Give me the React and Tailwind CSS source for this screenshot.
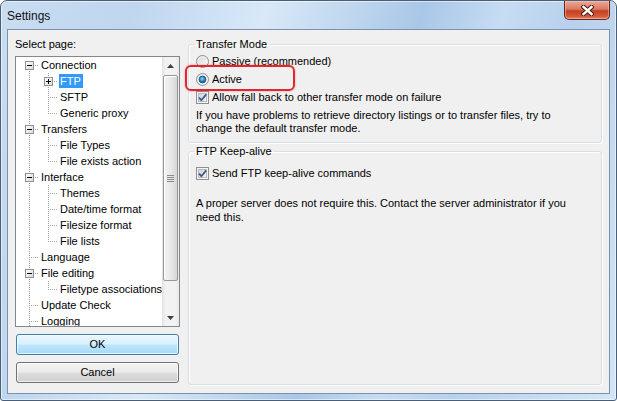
import React from "react";

const rows = [
  { c: ["toptee"], b: "minus", t: "Connection" },
  { c: ["pipe", "tee"], b: "plus", t: "FTP", sel: true },
  { c: ["pipe", "tee"], t: "SFTP" },
  { c: ["pipe", "corner"], t: "Generic proxy" },
  { c: ["tee"], b: "minus", t: "Transfers" },
  { c: ["pipe", "tee"], t: "File Types" },
  { c: ["pipe", "corner"], t: "File exists action" },
  { c: ["tee"], b: "minus", t: "Interface" },
  { c: ["pipe", "tee"], t: "Themes" },
  { c: ["pipe", "tee"], t: "Date/time format" },
  { c: ["pipe", "tee"], t: "Filesize format" },
  { c: ["pipe", "corner"], t: "File lists" },
  { c: ["tee"], t: "Language" },
  { c: ["tee"], b: "minus", t: "File editing" },
  { c: ["pipe", "corner"], t: "Filetype associations" },
  { c: ["tee"], t: "Update Check" },
  { c: ["tee"], t: "Logging" },
];

function Defs() {
  return (
    <svg width="0" height="0" className="block">
      <defs>
        <linearGradient id="boxg" x1="0" y1="0" x2="1" y2="1">
          <stop offset="0" stopColor="#ffffff" />
          <stop offset="1" stopColor="#d8d8d8" />
        </linearGradient>
        <linearGradient id="radg" x1="0" y1="0" x2="1" y2="1">
          <stop offset="0" stopColor="#d6d6d6" />
          <stop offset="1" stopColor="#fbfbfb" />
        </linearGradient>
        <radialGradient id="dotg" cx="0.45" cy="0.4" r="0.6">
          <stop offset="0" stopColor="#8fd6fb" />
          <stop offset="0.55" stopColor="#2f8bd0" />
          <stop offset="1" stopColor="#154e80" />
        </radialGradient>
        <linearGradient id="chkg" x1="0" y1="0" x2="1" y2="1">
          <stop offset="0" stopColor="#cdd0d6" />
          <stop offset="1" stopColor="#f7f7f7" />
        </linearGradient>
      </defs>
    </svg>
  );
}

function TreeCell({ kind, box }) {
  const dot = { stroke: "#a0a0a0", strokeDasharray: "1 1", strokeWidth: 1 };
  return (
    <svg width="19" height="16" className="block shrink-0">
      {kind === "pipe" && <line x1="9.5" y1="0" x2="9.5" y2="16" {...dot} />}
      {kind === "tee" && (
        <>
          <line x1="9.5" y1="0" x2="9.5" y2="16" {...dot} />
          <line x1="9" y1="8.5" x2="19" y2="8.5" {...dot} />
        </>
      )}
      {kind === "corner" && (
        <>
          <line x1="9.5" y1="0" x2="9.5" y2="9" {...dot} />
          <line x1="9" y1="8.5" x2="19" y2="8.5" {...dot} />
        </>
      )}
      {kind === "toptee" && (
        <>
          <line x1="9.5" y1="8" x2="9.5" y2="16" {...dot} />
          <line x1="9" y1="8.5" x2="19" y2="8.5" {...dot} />
        </>
      )}
      {box && (
        <>
          <rect x="5.5" y="4.5" width="8" height="8" fill="url(#boxg)" stroke="#919191" />
          <line x1="7" y1="8.5" x2="12" y2="8.5" stroke="#000" />
          {box === "plus" && <line x1="9.5" y1="6" x2="9.5" y2="11" stroke="#000" />}
        </>
      )}
    </svg>
  );
}

function Radio({ checked }) {
  return (
    <svg width="13" height="13" className="block shrink-0">
      <circle cx="6.5" cy="6.5" r="6" fill="url(#radg)" stroke="#8e8f8f" />
      <circle cx="6.5" cy="6.5" r="4.6" fill="none" stroke="#f4f4f4" strokeWidth="0.8" />
      {checked && <circle cx="6.5" cy="6.5" r="3.4" fill="url(#dotg)" stroke="#1a4f7c" strokeWidth="0.8" />}
    </svg>
  );
}

function Check() {
  return (
    <svg width="13" height="13" className="block shrink-0">
      <rect x="0.5" y="0.5" width="12" height="12" fill="#f4f4f4" stroke="#8e8f8f" />
      <rect x="2.5" y="2.5" width="8" height="8" fill="url(#chkg)" stroke="#b9bcc2" />
      <path d="M3 6.6 L5.4 9.2 L10.2 3.4" fill="none" stroke="#3c5689" strokeWidth="1.7" />
    </svg>
  );
}

function Arrow({ up }) {
  return (
    <div className="flex h-[17px] items-center justify-center">
      <svg width="7" height="4" className="block">
        {up ? <path d="M0 4 L3.5 0 L7 4 Z" fill="#404040" /> : <path d="M0 0 L3.5 4 L7 0 Z" fill="#404040" />}
      </svg>
    </div>
  );
}

export default function App() {
  return (
    <div className="h-[401px] w-[617px] bg-white font-['Liberation_Sans',Arial,sans-serif] text-[11px] text-black">
      <Defs />
      <div className="flex h-full w-full flex-col overflow-hidden rounded-t-[7px] rounded-b-[3px] border border-[#4b5e78] bg-[linear-gradient(108deg,#c9ddf2_0%,#bfd6ef_18%,#d8e8f8_36%,#c3d9f0_46%,#a9c7e7_57%,#c6dcf3_68%,#b7d0ec_78%,#d3e6f8_100%)] shadow-[inset_0_0_0_1px_rgba(255,255,255,0.55)]">
        <div className="flex h-[28px] shrink-0 items-start justify-between pl-[6px] pr-[6px]">
          <div className="flex h-[28px] items-center pt-[1px] text-[12px] text-[#111]">Settings</div>
          <div className="flex h-[19px] w-[46px] items-center justify-center rounded-b-[5px] border border-t-0 border-[#6b2418] bg-[linear-gradient(180deg,#e9a998_0%,#da7a63_45%,#c4401f_55%,#d25a3e_85%,#e28a6e_100%)] shadow-[inset_0_0_0_1px_rgba(255,210,190,0.45)]">
            <svg width="13" height="11" className="block">
              <path d="M2.5 2 L10.5 9 M10.5 2 L2.5 9" stroke="#4a1a12" strokeWidth="4.4" strokeLinecap="square" />
              <path d="M2.5 2 L10.5 9 M10.5 2 L2.5 9" stroke="#ffffff" strokeWidth="2.4" strokeLinecap="square" />
            </svg>
          </div>
        </div>

        <div className="mx-[6px] mb-[6px] flex flex-1 border border-[#7d91aa] bg-[#f0f0f0] pl-[7px] pr-[7px] pt-[7px] pb-[8px]">
          <div className="flex w-[165px] shrink-0 flex-col">
            <div className="h-[14px] leading-[14px]">Select page:</div>
            <div className="mt-[5px] flex h-[271px] border border-[#828790] bg-white">
              <div className="flex-1 overflow-hidden pl-[4px]">
                {rows.map((r, i) => (
                  <div key={i} className="flex h-[16px] items-center">
                    {r.c.map((k, j) => (
                      <TreeCell key={j} kind={k} box={j === r.c.length - 1 ? r.b : undefined} />
                    ))}
                    <span
                      className={
                        r.sel
                          ? "ml-[1px] h-[14px] whitespace-nowrap bg-[#3399ff] px-[1px] pr-[2px] leading-[14px] text-white"
                          : "ml-[1px] h-[14px] whitespace-nowrap px-[1px] pr-[2px] leading-[14px]"
                      }
                    >
                      {r.t}
                    </span>
                  </div>
                ))}
              </div>
              <div className="flex w-[17px] shrink-0 flex-col bg-[linear-gradient(90deg,#e2e2e2_0%,#f2f2f2_20%,#f2f2f2_80%,#e8e8e8_100%)]">
                <Arrow up />
                <div className="flex flex-1 flex-col px-[1px]">
                  <div className="mt-[1px] flex h-[206px] items-center justify-center rounded-[2px] border border-[#979797] bg-[linear-gradient(90deg,#f3f3f3_0%,#e9e9e9_50%,#d6d6d6_100%)] shadow-[inset_1px_1px_0_#fff]">
                    <div className="flex flex-col gap-[1px]">
                      <div className="h-px w-[7px] bg-[#8a8a8a]" />
                      <div className="h-px w-[7px] bg-[#8a8a8a]" />
                      <div className="h-px w-[7px] bg-[#8a8a8a]" />
                      <div className="h-px w-[7px] bg-[#8a8a8a]" />
                    </div>
                  </div>
                </div>
                <Arrow />
              </div>
            </div>
            <div className="mx-[1px] mt-[7px] flex h-[21px] items-center justify-center rounded-[3px] border border-[#3c7fb1] bg-[linear-gradient(180deg,#eaf6fd_0%,#d9f0fc_48%,#bee6fd_52%,#a7d9f5_100%)] shadow-[inset_0_0_0_1px_rgba(255,255,255,0.7)]">
              OK
            </div>
            <div className="mx-[1px] mt-[7px] flex h-[21px] items-center justify-center rounded-[3px] border border-[#707070] bg-[linear-gradient(180deg,#f2f2f2_0%,#ebebeb_48%,#dddddd_52%,#cfcfcf_100%)] shadow-[inset_0_0_0_1px_rgba(255,255,255,0.7)]">
              Cancel
            </div>
          </div>

          <div className="ml-[8px] flex flex-1 flex-col">
            <fieldset className="h-[106px] rounded-[3px] border border-[#d5dfe5] pl-[7px] pr-[7px] shadow-[inset_1px_1px_0_#fff,1px_1px_0_#fff]">
              <legend className="-ml-[2px] px-[2px] leading-[14px]">Transfer Mode</legend>
              <div className="mt-[1px] flex h-[18px] items-center gap-[3px]">
                <Radio />
                <span>Passive (recommended)</span>
              </div>
              <div className="relative flex h-[18px] items-center gap-[3px]">
                <Radio checked />
                <span>Active</span>
                <div className="absolute -left-[11px] -top-[5px] h-[26px] w-[110px] rounded-[6px] border-2 border-[#e3262c] shadow-[0_0_2px_rgba(227,38,44,0.5)]" />
              </div>
              <div className="flex h-[18px] items-center gap-[3px]">
                <Check />
                <span>Allow fall back to other transfer mode on failure</span>
              </div>
              <div className="mt-[3px] leading-[13px]">
                If you have problems to retrieve directory listings or to transfer files, try to
                <br />
                change the default transfer mode.
              </div>
            </fieldset>
            <fieldset className="mt-[1px] flex-1 rounded-[3px] border border-[#d5dfe5] pl-[7px] pr-[7px] shadow-[inset_1px_1px_0_#fff,1px_1px_0_#fff]">
              <legend className="-ml-[2px] px-[2px] leading-[14px]">FTP Keep-alive</legend>
              <div className="mt-[6px] flex h-[18px] items-center gap-[3px]">
                <Check />
                <span>Send FTP keep-alive commands</span>
              </div>
              <div className="mt-[14px] leading-[14px]">
                A proper server does not require this. Contact the server administrator if you
                <br />
                need this.
              </div>
            </fieldset>
          </div>
        </div>
      </div>
    </div>
  );
}
